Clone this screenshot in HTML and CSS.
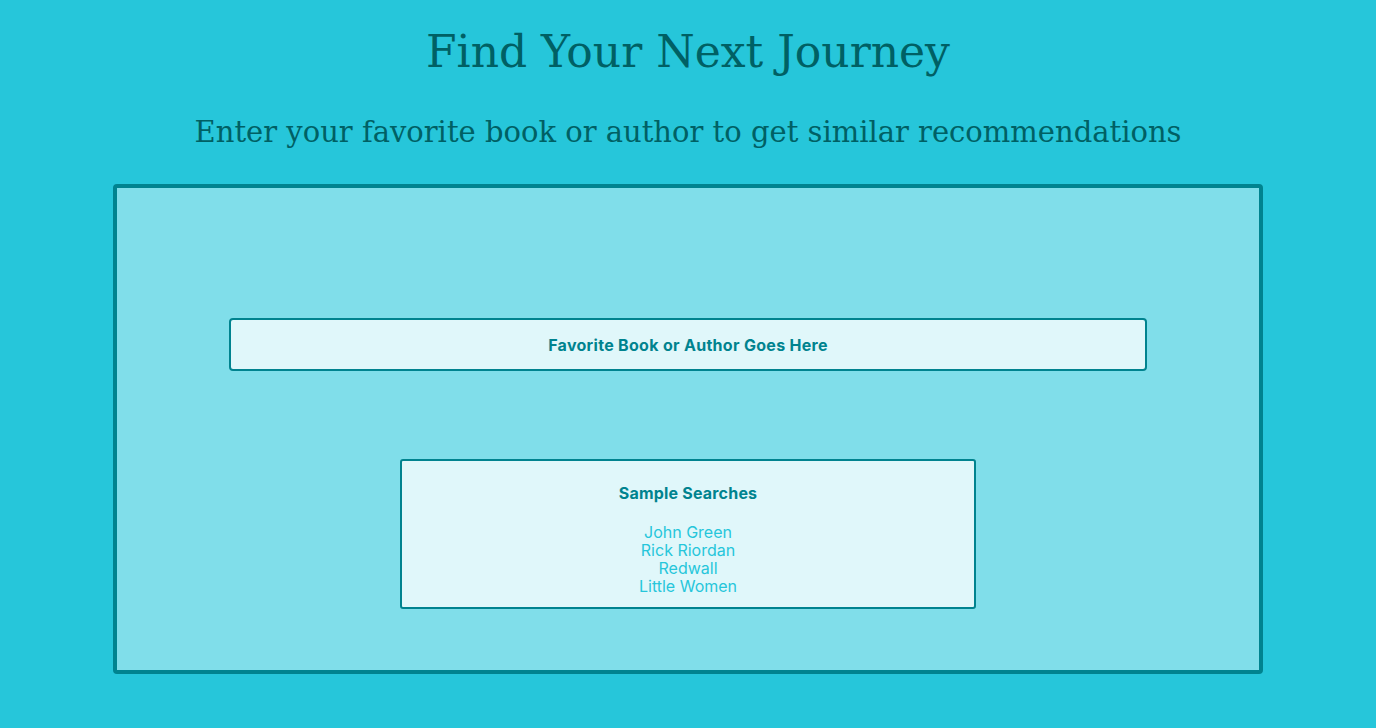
FILE: index.html
```html
<!DOCTYPE html>
<html lang="en">
<head>
<meta charset="utf-8">
<title>Find Your Next Journey</title>
<link rel="stylesheet" href="styles.css">
</head>
<body>
<header class="header">
  <h1 class="title">Find Your Next Journey</h1>
  <h2 class="subtitle">Enter your favorite book or author to get similar recommendations</h2>
</header>
<main class="panel">
  <input class="search" type="text" placeholder="Favorite Book or Author Goes Here">
  <section class="samples">
    <h3 class="samples-title">Sample Searches</h3>
    <ul class="samples-list">
      <li><a class="sample-link" href="#">John Green</a></li>
      <li><a class="sample-link" href="#">Rick Riordan</a></li>
      <li><a class="sample-link" href="#">Redwall</a></li>
      <li><a class="sample-link" href="#">Little Women</a></li>
    </ul>
  </section>
</main>
</body>
</html>
```
FILE: styles.css
```css
* { box-sizing: border-box; }
html, body { margin: 0; padding: 0; }
body {
  background: #26c6da;
  width: 1376px;
  height: 728px;
  overflow: hidden;
  font-family: Inter, "Liberation Sans", sans-serif;
}
.header {
  text-align: center;
  color: #006064;
  font-family: "DejaVu Serif", "Liberation Serif", serif;
  padding-top: 22px;
}
.title {
  margin: 0;
  font-size: 44px;
  font-weight: 400;
  line-height: 60px;
}
.subtitle {
  margin: 30px 0 0;
  font-size: 29px;
  font-weight: 400;
  line-height: 40px;
}
.panel {
  margin: 32px auto 0;
  width: 1150px;
  height: 490px;
  background: #80deea;
  border: 4px solid #00838f;
  border-radius: 4px;
  padding-top: 130px;
  display: flex;
  flex-direction: column;
  align-items: center;
}
.search {
  width: 918px;
  height: 53px;
  margin: 0;
  background: #e0f7fa;
  border: 2px solid #00838f;
  border-radius: 4px;
  text-align: center;
  font-family: Inter, "Liberation Sans", sans-serif;
  font-size: 16px;
  font-weight: 700;
  letter-spacing: 0.3px;
  color: #00838f;
  outline: none;
}
.search::placeholder { color: #00838f; opacity: 1; }
.samples {
  margin-top: 88px;
  width: 576px;
  height: 150px;
  background: #e0f7fa;
  border: 2px solid #00838f;
  border-radius: 3px;
  padding-top: 22px;
  text-align: center;
}
.samples-title {
  margin: 0;
  font-size: 16px;
  font-weight: 700;
  letter-spacing: 0.2px;
  line-height: 20px;
  color: #00838f;
}
.samples-list {
  list-style: none;
  margin: 20px 0 0;
  padding: 0;
}
.samples-list li {
  font-size: 16px;
  line-height: 18px;
}
.sample-link {
  color: #26c6da;
  text-decoration: none;
}
```
